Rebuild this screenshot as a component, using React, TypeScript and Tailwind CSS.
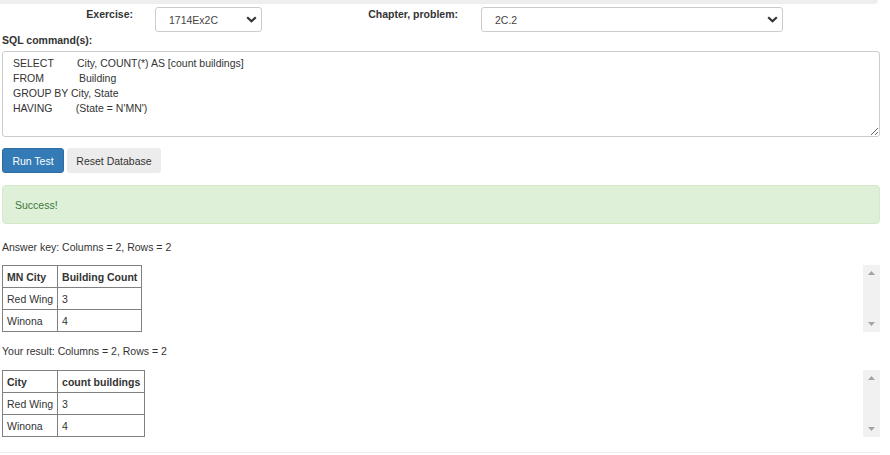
import type { ReactNode } from "react";

const SQL_TEXT = [
    "SELECT        City, COUNT(*) AS [count buildings]",
    "FROM            Building",
    "GROUP BY City, State",
    "HAVING        (State = N'MN')",
].join("\n");

const answerRows = [
    ["Red Wing", "3"],
    ["Winona", "4"],
];

export default function App() {
    return (
        <div className="w-[890px] bg-white font-['Liberation_Sans',Arial,sans-serif] text-[10.5px] leading-[14px] text-[#333]">
            <div className="h-[4px] w-[878px] rounded-br-[4px] bg-[#eeeeee]" />

            <div className="w-[880px] pl-[2px]">
                <div className="mt-[3px] flex items-start">
                    <div className="w-[131px] text-right font-bold">Exercise:</div>
                    <FakeSelect className="ml-[22px] w-[107px]" value="1714Ex2C" />
                    <div className="w-[196px] text-right font-bold">Chapter, problem:</div>
                    <FakeSelect className="ml-[23px] w-[302px]" value="2C.2" />
                </div>

                <p className="mt-[1px] font-bold">SQL command(s):</p>

                <textarea
                    readOnly
                    defaultValue={SQL_TEXT}
                    spellCheck={false}
                    className="mt-[4px] block h-[86px] w-full rounded-[3px] border border-[#cccccc] bg-white px-[10px] pt-[4px] text-[10.5px] leading-[15px] text-[#333] outline-none"
                />

                <div className="mt-[11px] flex gap-[3px]">
                    <button className="h-[25px] w-[62px] rounded-[3px] border border-[#2e6da4] bg-[#337ab7] text-white">
                        Run Test
                    </button>
                    <button className="h-[25px] w-[94px] rounded-[3px] bg-[#ececec] text-[#333]">
                        Reset Database
                    </button>
                </div>

                <div className="mt-[12px] flex h-[39px] items-center rounded-[4px] border border-[#d6e9c6] bg-[#dff0d8] pl-[12px] text-[#3c763d]">
                    Success!
                </div>

                <p className="mt-[16px]">Answer key: Columns = 2, Rows = 2</p>
                <ResultBlock className="mt-[11px]" headers={["MN City", "Building Count"]} rows={answerRows} />

                <p className="mt-[12px]">Your result: Columns = 2, Rows = 2</p>
                <ResultBlock className="mt-[12px]" headers={["City", "count buildings"]} rows={answerRows} />
            </div>

            <div className="mt-[15px] h-px w-[880px] bg-[#eeeeee]" />
            <div className="h-[2px]" />
        </div>
    );
}

function FakeSelect({ className, value }: { className: string; value: string }) {
    return (
        <div
            className={`flex h-[25px] items-center justify-between rounded-[3px] border border-[#cccccc] bg-white pl-[13px] pr-[4px] text-[#444] ${className}`}
        >
            <span>{value}</span>
            <svg width="11" height="7" viewBox="0 0 11 7" aria-hidden="true">
                <polyline
                    points="1.2,1.2 5.5,5.2 9.8,1.2"
                    fill="none"
                    stroke="#333"
                    strokeWidth="2.2"
                />
            </svg>
        </div>
    );
}

function ResultBlock({
    className,
    headers,
    rows,
}: {
    className: string;
    headers: string[];
    rows: string[][];
}) {
    return (
        <div className={`flex h-[67px] items-start justify-between ${className}`}>
            <table className="border-collapse">
                <thead>
                    <tr>
                        {headers.map((h) => (
                            <Cell key={h} bold>
                                {h}
                            </Cell>
                        ))}
                    </tr>
                </thead>
                <tbody>
                    {rows.map((row) => (
                        <tr key={row[0]}>
                            {row.map((c, i) => (
                                <Cell key={i}>{c}</Cell>
                            ))}
                        </tr>
                    ))}
                </tbody>
            </table>
            <FakeScrollbar />
        </div>
    );
}

function Cell({ bold, children }: { bold?: boolean; children: ReactNode }) {
    return (
        <td
            className={`h-[22px] border border-[#808080] px-[4px] py-0 text-left align-middle whitespace-nowrap ${bold ? "font-bold" : ""}`}
        >
            {children}
        </td>
    );
}

function FakeScrollbar() {
    return (
        <div className="flex h-[67px] w-[17px] flex-col items-center justify-between bg-[#f1f1f1] py-[6px]">
            <svg width="7" height="4" viewBox="0 0 7 4" aria-hidden="true">
                <polygon points="0,4 3.5,0 7,4" fill="#a3a3a3" />
            </svg>
            <svg width="7" height="4" viewBox="0 0 7 4" aria-hidden="true">
                <polygon points="0,0 7,0 3.5,4" fill="#a3a3a3" />
            </svg>
        </div>
    );
}
